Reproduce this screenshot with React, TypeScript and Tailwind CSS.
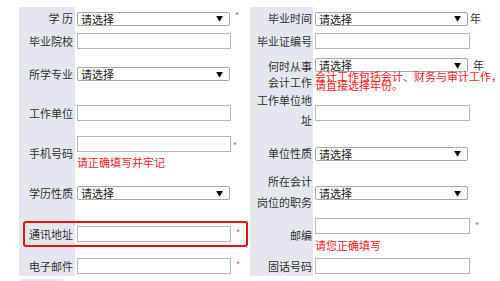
import React from "react";

const FONT = { fontFamily: '"Noto Sans CJK SC", "Noto Sans", sans-serif' };

function Label({ children, className = "" }: { children: React.ReactNode; className?: string }) {
  return (
    <div className={`bg-[#e3e8ef] flex items-center justify-end text-right text-[11px] text-[#333] ${className}`}>
      {children}
    </div>
  );
}

function Select({ w = "w-[153px]" }: { w?: string }) {
  return (
    <div className={`${w} h-[14px] border border-[#a9a9a9] rounded-[2px] bg-white flex items-center justify-between pl-[3px] pr-[6px] text-[11px] leading-[12px] text-[#222] shrink-0`}>
      <span>请选择</span>
      <span className="text-[7px] leading-none text-black">▼</span>
    </div>
  );
}

function Input({ w = "w-[154px]" }: { w?: string }) {
  return <div className={`${w} h-[16px] border border-[#b8b8b8] bg-white shrink-0`} />;
}

function Star({ className = "" }: { className?: string }) {
  return <span className={`text-[9px] leading-none text-[#e8585d] self-start ${className}`}>*</span>;
}

export default function App() {
  return (
    <div className="relative w-[500px] h-[281px] bg-white overflow-hidden" style={FONT}>
      <div className="grid grid-cols-[19px_56px_175px_63px_187px] grid-rows-[23px_22px_44px_34px_44px_38px_44px_20px] pt-[7px]">
        {/* row 1 */}
        <div />
        <Label className="pr-[2px]">学 历</Label>
        <div className="flex items-center pl-[2px]">
          <Select />
          <Star className="ml-[5px] mt-[4px]" />
        </div>
        <Label className="pr-[1px]">毕业时间</Label>
        <div className="flex items-center pl-[2px]">
          <Select />
          <span className="ml-[2px] text-[11px] text-[#333]">年</span>
        </div>

        {/* row 2 */}
        <div />
        <Label className="pr-[2px]">毕业院校</Label>
        <div className="flex items-center pl-[2px]">
          <Input />
        </div>
        <Label className="pr-[1px]">毕业证编号</Label>
        <div className="flex items-center pl-[2px]">
          <Input w="w-[155px]" />
        </div>

        {/* row 3 */}
        <div />
        <Label className="pr-[2px]">所学专业</Label>
        <div className="flex items-center pl-[2px]">
          <Select />
        </div>
        <Label className="pr-[1px] leading-[16px]">
          <div>
            何时从事
            <br />
            会计工作
          </div>
        </Label>
        <div className="flex flex-col justify-center pl-[2px]">
          <div className="flex items-center">
            <Select />
            <span className="ml-[5px] text-[11px] leading-[13px] text-[#333]">年</span>
          </div>
          <div className="text-[11px] leading-[9px] text-[#ff1a1a] whitespace-nowrap mt-[0px]">
            会计工作包括会计、财务与审计工作，
            <br />
            请直接选择年份。
          </div>
        </div>

        {/* row 4 */}
        <div />
        <Label className="pr-[2px]">工作单位</Label>
        <div className="flex items-center pl-[2px]">
          <Input />
        </div>
        <Label className="pr-[1px] leading-[20px]">
          <div className="-mt-[6px]">
            工作单位地
            <br />
            址
          </div>
        </Label>
        <div className="flex items-center pl-[2px]">
          <Input w="w-[155px]" />
        </div>

        {/* row 5 */}
        <div />
        <Label className="pr-[2px]">
          <span className="mt-[2px]">手机号码</span>
        </Label>
        <div className="flex flex-col justify-center pl-[2px]">
          <div className="flex">
            <Input />
            <Star className="ml-[2px] mt-[5px]" />
          </div>
          <div className="text-[11px] leading-[12px] text-[#ff1a1a] mt-[4px]">请正确填写并牢记</div>
        </div>
        <Label className="pr-[1px]">
          <span className="mt-[3px]">单位性质</span>
        </Label>
        <div className="flex items-center pl-[2px] pt-[3px]">
          <Select />
        </div>

        {/* row 6 */}
        <div />
        <Label className="pr-[2px]">学历性质</Label>
        <div className="flex items-center pl-[2px]">
          <Select />
        </div>
        <Label className="pr-[1px] leading-[21px]">
          <div className="-mt-[2px]">
            所在会计
            <br />
            岗位的职务
          </div>
        </Label>
        <div className="flex items-center pl-[2px]">
          <Select />
        </div>

        {/* row 7 */}
        <div />
        <Label className="pr-[2px]">通讯地址</Label>
        <div className="flex items-center pl-[2px]">
          <Input />
          <Star className="ml-[5px] mt-[16px]" />
        </div>
        <Label className="pr-[1px]">
          <span className="mt-[2px]">邮编</span>
        </Label>
        <div className="flex flex-col justify-center pl-[2px]">
          <div className="flex">
            <Input w="w-[155px]" />
            <Star className="ml-[5px] mt-[3px]" />
          </div>
          <div className="text-[11px] leading-[12px] text-[#ff1a1a] mt-[5px]">请您正确填写</div>
        </div>

        {/* row 8 */}
        <div />
        <Label className="pr-[2px]">电子邮件</Label>
        <div className="flex items-center pl-[2px]">
          <Input />
          <Star className="ml-[5px] mt-[4px]" />
        </div>
        <Label className="pr-[1px]">固话号码</Label>
        <div className="flex items-center pl-[2px]">
          <Input w="w-[155px]" />
        </div>
      </div>
      <div className="ml-[21px] mt-[3px] w-[42px] h-[4px] bg-[#e3e8ef]" />

      <div className="absolute left-[23px] top-[221px] w-[225px] h-[26px] border-2 border-[#ee1111] rounded-[3px] pointer-events-none" />
    </div>
  );
}
